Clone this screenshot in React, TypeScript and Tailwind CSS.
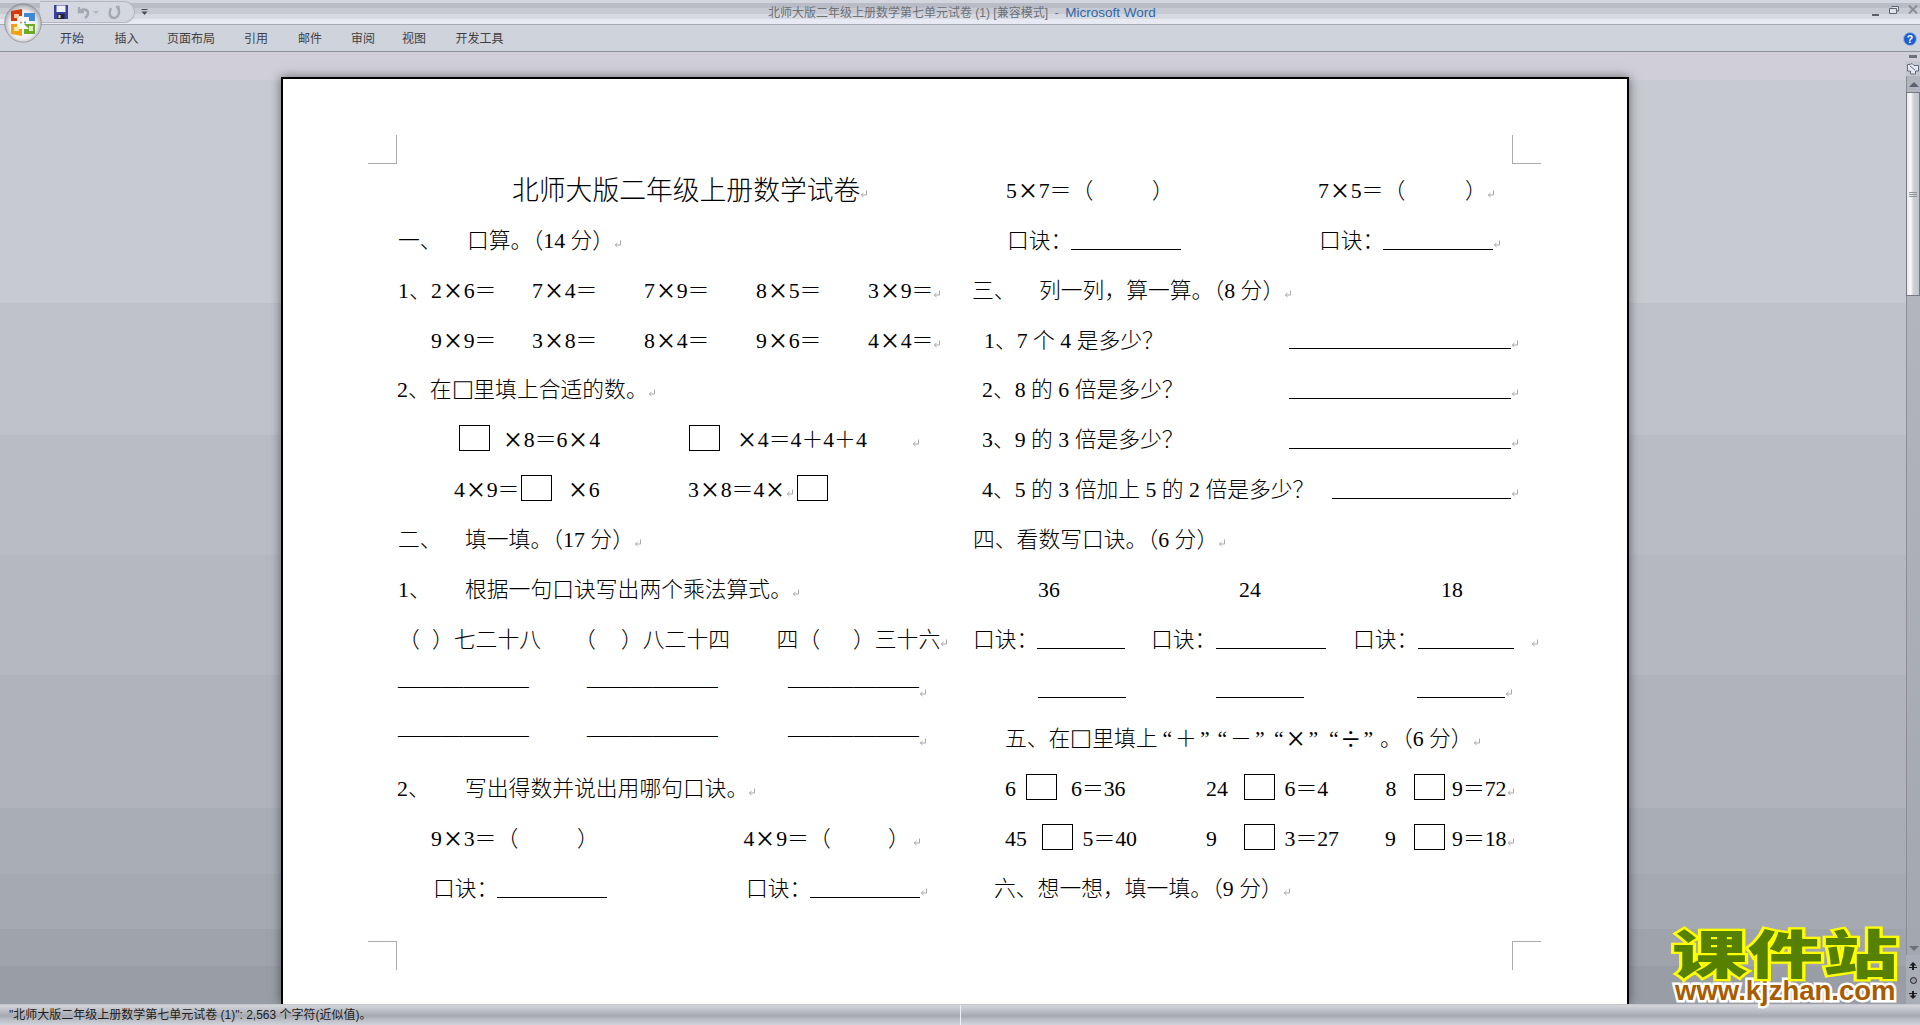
import React from "react";

const tabs = [
  { label: "开始", w: "w-[54.5px]" },
  { label: "插入", w: "w-[52.5px]" },
  { label: "页面布局", w: "w-[77px]" },
  { label: "引用", w: "w-[54px]" },
  { label: "邮件", w: "w-[53px]" },
  { label: "审阅", w: "w-[51px]" },
  { label: "视图", w: "w-[53.5px]" },
  { label: "开发工具", w: "w-[60px]" },
];

// the Word page uses full-width ×, ÷ and □, the fonts here only have narrow ones
function T({ t }: { t: string }) {
  const parts = t.split(/([×÷□])/);
  return (
    <>
      {parts.map((p, i) =>
        p === "×" || p === "÷" ? (
          <span key={i} className="inline-block w-[21.8px] scale-[1.5] text-center">
            {p}
          </span>
        ) : p === "□" ? (
          <span key={i} className="inline-block w-[21.8px] scale-[1.35] text-center">
            {p}
          </span>
        ) : (
          <span key={i}>{p}</span>
        ),
      )}
    </>
  );
}

function Row({ className, children }: { className: string; children: React.ReactNode }) {
  return <div className={"flex h-[49.86px] items-center whitespace-pre " + className}>{children}</div>;
}

function S({ className, t }: { className?: string; t: string }) {
  return (
    <span className={"shrink-0 " + (className ?? "")}>
      <T t={t} />
    </span>
  );
}

function Ret({ className }: { className?: string }) {
  return (
    <svg viewBox="0 0 8 8" className={"mt-[6px] h-2 w-2 shrink-0 " + (className ?? "")} fill="none" stroke="#a8a8a8" strokeWidth="1">
      <path d="M6.5 0.5V5H1.5" />
      <path d="M3.5 3L1.2 5L3.5 7" />
    </svg>
  );
}

function Box({ className }: { className?: string }) {
  return <span className={"block h-[26px] w-[31px] shrink-0 -translate-y-[2px] border border-black " + (className ?? "")} />;
}

function Line({ className }: { className: string }) {
  return <span className={"mb-[16px] h-px shrink-0 self-end bg-black " + className} />;
}

function Dash({ className }: { className?: string }) {
  return <span className={"shrink-0 -translate-y-[4px] " + (className ?? "")}>——————</span>;
}

function OfficeButton() {
  return (
    <svg viewBox="0 0 38 40" className="absolute left-[4px] top-[3px] h-[40px] w-[38px]">
      <defs>
        <radialGradient id="orb" cx="50%" cy="55%" r="58%">
          <stop offset="0%" stopColor="#ffffff" />
          <stop offset="62%" stopColor="#eeeef0" />
          <stop offset="85%" stopColor="#b9bbc1" />
          <stop offset="100%" stopColor="#85878e" />
        </radialGradient>
      </defs>
      <ellipse cx="19" cy="20" rx="18.3" ry="19.2" fill="url(#orb)" stroke="#8d8f95" strokeWidth="0.8" />
      <path d="M7 8L18 6V13H13V18H7Z" fill="#d63a0c" />
      <path d="M10 11H15V15H10Z" fill="#f7c9a0" />
      <path d="M20 10H31V18H25V14H20Z" fill="#3f8ad0" />
      <path d="M7 21H13V26H18V33L7 31Z" fill="#f2a114" />
      <path d="M10 24H15V28H10Z" fill="#fbe6a8" />
      <path d="M20 21H31V31H20V26H25Z" fill="#6fa92e" />
      <path d="M25 23H29V28H25Z" fill="#dcefc0" />
      <circle cx="17" cy="19.5" r="1" fill="#f08020" />
      <circle cx="21" cy="19.5" r="1" fill="#3f8ad0" />
    </svg>
  );
}

function Qat() {
  return (
    <div className="flex h-[22px] w-[95px] shrink-0 items-center rounded-r-[11px] border-y border-r border-[#b4b7c0] bg-[#d4d7df] pl-[14px]">
      <svg viewBox="0 0 14 14" className="h-[14px] w-[14px] shrink-0">
        <rect x="0" y="0" width="14" height="14" fill="#3b3f9e" />
        <rect x="2.5" y="0.5" width="9" height="6.5" fill="#eef0fa" />
        <rect x="3.5" y="9" width="7" height="5" fill="#23252e" />
        <rect x="4.5" y="10" width="2" height="3" fill="#d8d8d8" />
      </svg>
      <svg viewBox="0 0 14 14" className="ml-[8px] h-[14px] w-[14px] shrink-0" fill="none" stroke="#a4a8b2" strokeWidth="2.4">
        <path d="M3 2V7H8" />
        <path d="M3 7C6 3 12 4 12 8C12 10.5 10.5 12 9 13" />
      </svg>
      <span className="ml-[3px] h-0 w-0 border-x-[3px] border-t-[3px] border-x-transparent border-t-[#b0b3bc]" />
      <svg viewBox="0 0 14 14" className="ml-[8px] h-[14px] w-[14px] shrink-0" fill="none" stroke="#a4a8b2" strokeWidth="2.4">
        <path d="M9 2H11.5V5" />
        <path d="M11 3C13 7 12 13 7 13C2 13 2 7 4 3" />
      </svg>
    </div>
  );
}

function Scrollbar() {
  return (
    <div className="relative z-10 flex w-[14px] shrink-0 flex-col">
      <div className="flex h-[9px] items-center justify-center">
        <span className="h-[3px] w-[8px] bg-[#6e7078]" />
      </div>
      <div className="flex h-[15px] items-center justify-center bg-[#c4c7cf]">
        <svg viewBox="0 0 12 12" className="h-3 w-3">
          <path d="M0.5 1.5H3L5 0.5L7 2.5H11.5V8H8.5V11H3.5V8H0.5Z" fill="#e8e6ee" stroke="#47506a" strokeWidth="0.8" />
          <path d="M3 3L8 7" stroke="#47506a" strokeWidth="0.8" />
        </svg>
      </div>
      <div className="flex h-[16px] items-center justify-center border-l border-[#8a8d95] bg-[#b2b5be]">
        <span className="h-0 w-0 border-x-[5px] border-b-[5px] border-x-transparent border-b-[#5c6170]" />
      </div>
      <div className="flex h-[204px] flex-col items-center justify-center gap-[1px] border border-[#777a82] bg-[linear-gradient(90deg,#e8e8ec,#fbfaf8_30%,#cdd0d8_55%,#c0c3cc)]">
        <span className="h-px w-[8px] bg-[#8f929a]" />
        <span className="h-px w-[8px] bg-[#8f929a]" />
        <span className="h-px w-[8px] bg-[#8f929a]" />
      </div>
      <div className="flex-1 border-l border-[#8a8d95] bg-[linear-gradient(180deg,#b2b5be,#a3a7af)]" />
      <div className="flex h-[14px] items-center justify-center border-l border-[#8a8d95] bg-[#a3a7af]">
        <span className="h-0 w-0 border-x-[5px] border-t-[5px] border-x-transparent border-t-[#6d7079]" />
      </div>
      <div className="flex h-[49px] flex-col items-center justify-around bg-[#a9adb6] pb-[1px] pt-[3px]">
        <svg viewBox="0 0 8 8" className="h-2 w-2" fill="#1c1c1c">
          <path d="M4 0L7.5 3.5H0.5Z" />
          <path d="M0 5H8V6H0Z" />
          <path d="M3 3H5V8H3Z" />
        </svg>
        <span className="h-[7px] w-[7px] rounded-full border border-[#222] bg-[#9a9ea6]" />
        <svg viewBox="0 0 8 8" className="h-2 w-2" fill="#1c1c1c">
          <path d="M4 8L7.5 4.5H0.5Z" />
          <path d="M0 2H8V3H0Z" />
          <path d="M3 0H5V5H3Z" />
        </svg>
      </div>
    </div>
  );
}

function LeftColumn() {
  return (
    <div className="w-[687px] shrink-0">
      <Row className="pl-[229px] text-[26.8px]">
        <span>北师大版二年级上册数学试卷</span>
        <Ret />
      </Row>
      <Row className="pl-[115px]">
        <S className="w-[69px]" t="一、" />
        <S t="口算。（14 分）" />
        <Ret />
      </Row>
      <Row className="pl-[115px]">
        <S className="w-[33px]" t="1、" />
        <S className="w-[101px]" t="2×6＝" />
        <S className="w-[112px]" t="7×4＝" />
        <S className="w-[112px]" t="7×9＝" />
        <S className="w-[112px]" t="8×5＝" />
        <S t="3×9＝" />
        <Ret />
      </Row>
      <Row className="pl-[148px]">
        <S className="w-[101px]" t="9×9＝" />
        <S className="w-[112px]" t="3×8＝" />
        <S className="w-[112px]" t="8×4＝" />
        <S className="w-[112px]" t="9×6＝" />
        <S t="4×4＝" />
        <Ret />
      </Row>
      <Row className="pl-[114px]">
        <S t="2、在□里填上合适的数。" />
        <Ret />
      </Row>
      <Row className="pl-[176px]">
        <Box className="mr-[12px]" />
        <S className="w-[187px]" t="×8＝6×4" />
        <Box className="mr-[16px]" />
        <S className="w-[176px]" t="×4＝4＋4＋4" />
        <Ret />
      </Row>
      <Row className="pl-[171px]">
        <S className="w-[67px]" t="4×9＝" />
        <Box className="mr-[15px]" />
        <S className="w-[121px]" t="×6" />
        <S className="w-[98px]" t="3×8＝4×" />
        <Ret className="mr-[3px]" />
        <Box />
      </Row>
      <Row className="pl-[115px]">
        <S className="w-[67px]" t="二、" />
        <S t="填一填。（17 分）" />
        <Ret />
      </Row>
      <Row className="pl-[115px]">
        <S className="w-[67px]" t="1、" />
        <S t="根据一句口诀写出两个乘法算式。" />
        <Ret />
      </Row>
      <Row className="pl-[115px]">
        <S className="w-[34px]" t="（" />
        <S className="w-[142px]" t="）七二十八" />
        <S className="w-[47px]" t="（" />
        <S className="w-[155.5px]" t="）八二十四" />
        <S className="w-[76.5px]" t="四（" />
        <S t="）三十六" />
        <Ret />
      </Row>
      <Row className="pl-[115px]">
        <Dash className="w-[189px]" />
        <Dash className="w-[201px]" />
        <Dash className="w-[131px]" />
        <Ret />
      </Row>
      <Row className="pl-[115px]">
        <Dash className="w-[189px]" />
        <Dash className="w-[201px]" />
        <Dash className="w-[131px]" />
        <Ret />
      </Row>
      <Row className="pl-[114px]">
        <S className="w-[68px]" t="2、" />
        <S t="写出得数并说出用哪句口诀。" />
        <Ret />
      </Row>
      <Row className="pl-[148px]">
        <S className="w-[146px]" t="9×3＝（" />
        <S className="w-[166.5px]" t="）" />
        <S className="w-[144.5px]" t="4×9＝（" />
        <S t="）" />
        <Ret className="ml-[3px]" />
      </Row>
      <Row className="pl-[150px]">
        <S className="w-[64px]" t="口诀：" />
        <Line className="mr-[139px] w-[110px]" />
        <S className="w-[64px]" t="口诀：" />
        <Line className="w-[110px]" />
        <Ret />
      </Row>
    </div>
  );
}

function RightColumn() {
  return (
    <div className="flex-1">
      <Row className="pl-[36px]">
        <S className="w-[146px]" t="5×7＝（" />
        <S className="w-[166px]" t="）" />
        <S className="w-[147px]" t="7×5＝（" />
        <S t="）" />
        <Ret />
      </Row>
      <Row className="pl-[37px]">
        <S className="w-[64px]" t="口诀：" />
        <Line className="mr-[138px] w-[110px]" />
        <S className="w-[64px]" t="口诀：" />
        <Line className="w-[110px]" />
        <Ret />
      </Row>
      <Row className="pl-[2px]">
        <S className="w-[67px]" t="三、" />
        <S t="列一列，算一算。（8 分）" />
        <Ret />
      </Row>
      <Row className="pl-[14px]">
        <S className="w-[305px]" t="1、7 个 4 是多少？" />
        <Line className="w-[222px]" />
        <Ret />
      </Row>
      <Row className="pl-[12px]">
        <S className="w-[307px]" t="2、8 的 6 倍是多少？" />
        <Line className="w-[222px]" />
        <Ret />
      </Row>
      <Row className="pl-[12px]">
        <S className="w-[307px]" t="3、9 的 3 倍是多少？" />
        <Line className="w-[222px]" />
        <Ret />
      </Row>
      <Row className="pl-[12px]">
        <S className="w-[350px]" t="4、5 的 3 倍加上 5 的 2 倍是多少？" />
        <Line className="w-[179px]" />
        <Ret />
      </Row>
      <Row className="pl-[3px]">
        <S t="四、看数写口诀。（6 分）" />
        <Ret />
      </Row>
      <Row className="pl-[68px]">
        <S className="w-[201px]" t="36" />
        <S className="w-[202px]" t="24" />
        <S t="18" />
      </Row>
      <Row className="pl-[3px]">
        <S className="w-[64px]" t="口诀：" />
        <Line className="mr-[26px] w-[88px]" />
        <S className="w-[65px]" t="口诀：" />
        <Line className="mr-[27px] w-[110px]" />
        <S className="w-[65px]" t="口诀：" />
        <Line className="mr-[17px] w-[96px]" />
        <Ret />
      </Row>
      <Row className="pl-[68px]">
        <Line className="mr-[90px] w-[88px]" />
        <Line className="mr-[113px] w-[88px]" />
        <Line className="w-[88px]" />
        <Ret />
      </Row>
      <Row className="pl-[35px]">
        <S className="w-[155px]" t="五、在□里填上" />
        <S className="w-[55px] text-center tracking-[3px]" t="“＋”" />
        <S className="w-[55px] text-center tracking-[3px]" t="“－”" />
        <S className="w-[55px] text-center tracking-[3px]" t="“×”" />
        <S className="w-[55px] text-center tracking-[3px]" t="“÷”" />
        <S t="。（6 分）" />
        <Ret />
      </Row>
      <Row className="pl-[35px]">
        <S className="w-[20.5px]" t="6" />
        <Box className="mr-[14.5px]" />
        <S className="w-[135px]" t="6＝36" />
        <S className="w-[38px]" t="24" />
        <Box className="mr-[9.5px]" />
        <S className="w-[101px]" t="6＝4" />
        <S className="w-[28.5px]" t="8" />
        <Box className="mr-[7px]" />
        <S t="9＝72" />
        <Ret />
      </Row>
      <Row className="pl-[35px]">
        <S className="w-[36.5px]" t="45" />
        <Box className="mr-[10px]" />
        <S className="w-[123.5px]" t="5＝40" />
        <S className="w-[38px]" t="9" />
        <Box className="mr-[9.5px]" />
        <S className="w-[100.5px]" t="3＝27" />
        <S className="w-[29px]" t="9" />
        <Box className="mr-[7px]" />
        <S t="9＝18" />
        <Ret />
      </Row>
      <Row className="pl-[24px]">
        <S t="六、想一想，填一填。（9 分）" />
        <Ret />
      </Row>
    </div>
  );
}

export default function App() {
  return (
    <div
      lang="zh-CN"
      className="relative flex h-[1025px] w-[1920px] flex-col overflow-hidden [font-family:'Liberation_Sans','Noto_Sans_CJK_SC',sans-serif] text-[12px]"
    >
      {/* title bar */}
      <div className="flex h-[25px] shrink-0 items-center border-b border-[#a8abb3] bg-[linear-gradient(180deg,#d3d6de_0,#d3d6de_3px,#b9bcc6_3px,#b9bcc6_8px,#c7cad2_8px,#c7cad2_14px,#d6d9e1_14px,#d6d9e1_19px,#e7eaf2_19px)] pl-[40px]">
        <Qat />
        <svg viewBox="0 0 7 6" className="ml-[6px] h-[6px] w-[7px] shrink-0" fill="#4a4c52">
          <path d="M0.5 0H6.5V1H0.5Z" />
          <path d="M0.5 2.5H6.5L3.5 6Z" />
        </svg>
        <div className="ml-[620px] flex shrink-0 items-center whitespace-pre pt-[2px] text-[#6e7076]">
          <span>北师大版二年级上册数学第七单元试卷 (1) [兼容模式]</span>
          <span className="text-[#6e7076]">  -  </span>
          <span className="text-[13.5px] text-[#2e68a8]">Microsoft Word</span>
        </div>
        <div className="ml-auto flex items-center">
          <span className="mt-[6px] h-[2px] w-[7px] bg-[#5c5f66]" />
          <svg viewBox="0 0 10 8" className="ml-[10px] mb-[5px] h-2 w-[10px]" fill="#dfe3ea" stroke="#5f6672" strokeWidth="1">
            <path d="M2.5 0.5H9.5V5H7.5" />
            <path d="M0.5 2.5H7.5V7.5H0.5Z" />
          </svg>
          <svg viewBox="0 0 10 9" className="ml-[9px] mb-[5px] mr-[2px] h-[9px] w-[10px]" fill="none" stroke="#8a8d95" strokeWidth="2">
            <path d="M1 0.5L9 8.5M9 0.5L1 8.5" />
          </svg>
        </div>
      </div>

      {/* ribbon tabs */}
      <div className="flex h-[27px] shrink-0 items-center border-b border-[#8f9299] bg-[#cfd3dc] pl-[60px] pt-[1px] text-[#3f3f3f]">
        {tabs.map((t) => (
          <span key={t.label} className={"shrink-0 " + t.w}>
            {t.label}
          </span>
        ))}
        <svg viewBox="0 0 14 14" className="ml-auto mr-[3px] h-[14px] w-[14px]">
          <circle cx="7" cy="7" r="6.5" fill="#1f5fd0" stroke="#9cb8e4" strokeWidth="1" />
          <text x="7" y="10.6" textAnchor="middle" fontSize="10.5" fontWeight="700" fill="#ffffff" fontFamily="Liberation Sans">
            ?
          </text>
        </svg>
      </div>

      {/* document area */}
      <div className="flex min-h-0 flex-1 overflow-hidden bg-[linear-gradient(180deg,#d0ced8_0,#d0ced8_28px,#c7cad2_28px,#c7cad2_251px,#bfc2cb_251px,#bfc2cb_383px,#b9bcc5_383px,#b9bcc5_503px,#b5b8c1_503px,#b5b8c1_623px,#b0b3bc_623px,#b0b3bc_756px,#a9adb6_756px,#a9adb6_822px,#a5a9b1_822px,#a5a9b1_877px,#9fa3ab_877px,#9fa3ab_914px,#999da5_914px)]">
        <div className="flex min-w-0 flex-1 flex-col pl-[281px] pt-[25px]">
          <div className="relative w-[1348px] flex-1 border-x-2 border-t-2 border-black bg-white pt-[87px] text-[21.8px] font-light leading-[30px] text-black shadow-[0_0_10px_rgba(0,0,0,0.5)] [font-family:'Liberation_Serif','Noto_Sans_CJK_SC',serif]">
            <span className="absolute left-[85px] top-[56px] h-[29px] w-[29px] border-b border-r border-[#a9adb3]" />
            <span className="absolute left-[1229px] top-[56px] h-[29px] w-[29px] border-b border-l border-[#a9adb3]" />
            <span className="absolute left-[85px] top-[862px] h-[29px] w-[29px] border-r border-t border-[#a9adb3]" />
            <span className="absolute left-[1229px] top-[862px] h-[29px] w-[29px] border-l border-t border-[#a9adb3]" />
            <div className="flex">
              <LeftColumn />
              <RightColumn />
            </div>
          </div>
        </div>
        <Scrollbar />
      </div>

      {/* status bar */}
      <div className="relative flex h-[21px] shrink-0 items-center border-t border-[#c4c6cc] bg-[linear-gradient(180deg,#d4d6dc,#a6a9b1_55%,#b8bbc3_70%,#d0d3da)] pl-[9px] text-[#1c1c1c]">
        <span>"北师大版二年级上册数学第七单元试卷 (1)": 2,563 个字符(近似值)。</span>
        <span className="absolute bottom-0 left-[960px] top-0 w-px bg-[#eef0f3]" />
      </div>

      {/* office orb sits over title bar and ribbon */}
      <OfficeButton />

      {/* site watermark */}
      <div className="absolute left-[1672px] top-[926px] whitespace-nowrap">
        <div className="origin-left scale-x-[1.45] text-[52px] font-black leading-[52px] text-[#568000] [font-family:'Noto_Sans_CJK_SC',sans-serif] [-webkit-text-stroke:4.5px_#ffff00] [paint-order:stroke_fill]">
          课件站
        </div>
        <div className="ml-[3px] text-[27.5px] font-bold leading-[25px] text-[#a85c00] [font-family:'Liberation_Sans',sans-serif] [-webkit-text-stroke:5px_#ffffff] [paint-order:stroke_fill]">
          www.kjzhan.com
        </div>
      </div>
    </div>
  );
}
